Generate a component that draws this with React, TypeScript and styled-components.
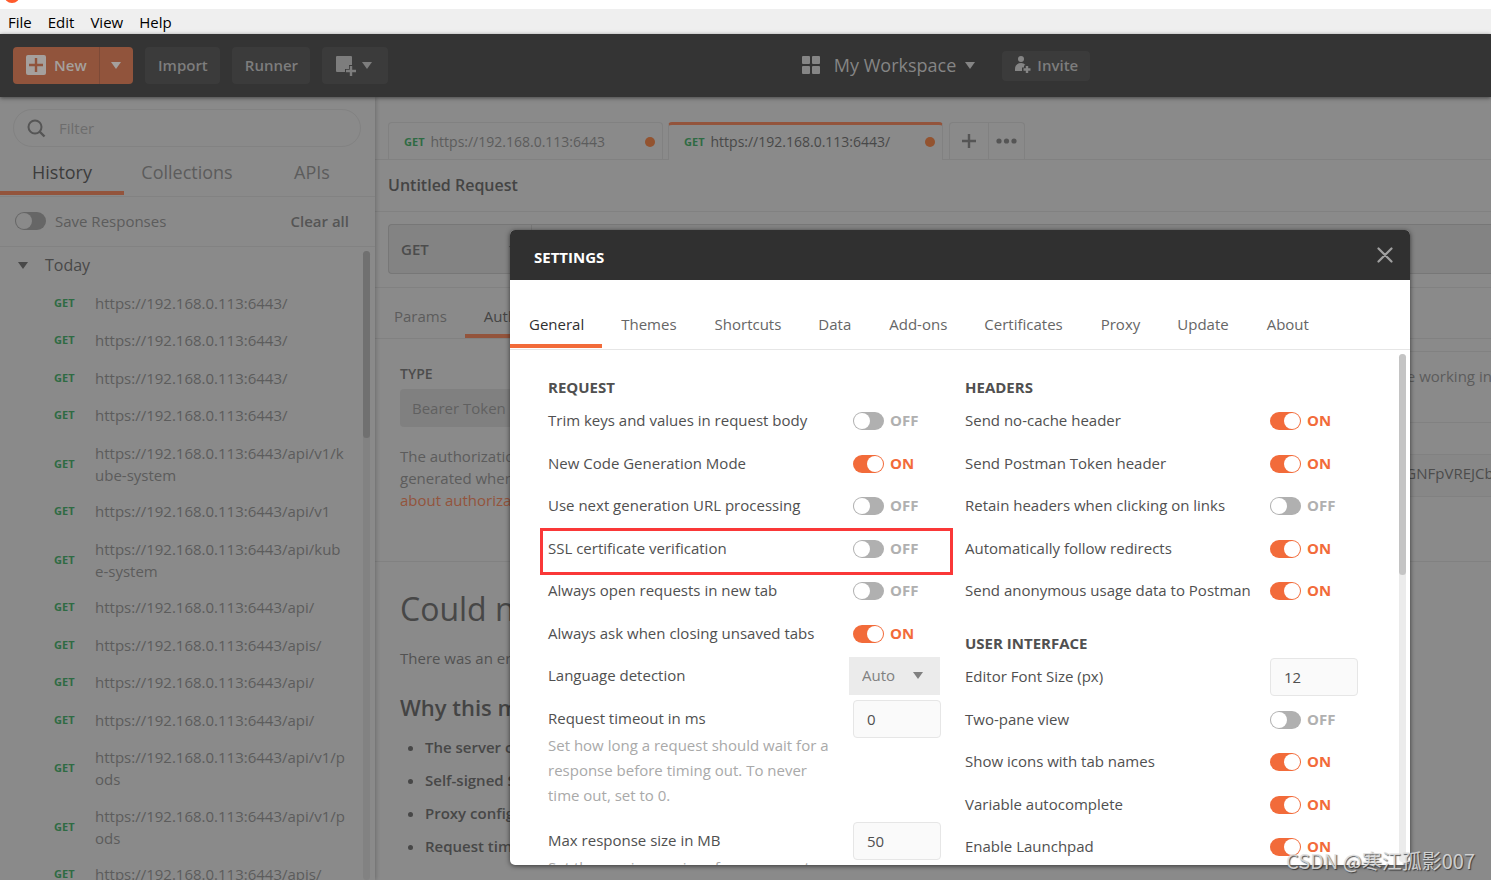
import React, { useState } from "react";
import styled, { createGlobalStyle, css } from "styled-components";

const GlobalStyle = createGlobalStyle`
  *, *::before, *::after { box-sizing: border-box; }
  html, body, #root { height: 100%; }
  body {
    margin: 0;
    overflow: hidden;
    background: #8a8a8a;
    color: #5c5c5c;
    font-family: "Open Sans", "Noto Sans CJK SC", sans-serif;
    font-size: 15px;
    line-height: 22px;
  }
  button, input, select { font: inherit; color: inherit; margin: 0; }
  button { border: 0; padding: 0; background: none; cursor: pointer; }
  h1, h2, h3, p, ul { margin: 0; padding: 0; font-weight: 400; }
`;

const Page = styled.div`
  position: relative;
  display: flex;
  flex-direction: column;
  height: 100vh;
  overflow: hidden;
`;

const TitleStrip = styled.div`
  flex: none;
  height: 9px;
  padding-left: 4px;
  background: #fff;
  svg { display: block; }
`;

const MenuBar = styled.nav`
  display: flex;
  flex: none;
  gap: 16px;
  height: 25px;
  padding: 1px 8px 0;
  background: #efefef;
  color: #000;
`;

const Toolbar = styled.header`
  position: relative;
  z-index: 1;
  display: flex;
  flex: none;
  align-items: center;
  height: 63px;
  padding-left: 13px;
  background: #343434;
  color: #7d7d7d;
  box-shadow: 0 1px 4px rgba(0, 0, 0, 0.5);
`;

const ToolGroup = styled.div`
  display: flex;
  align-items: center;
  gap: 12px;
`;

const ToolButton = styled.button<{ $small?: boolean; $menu?: boolean }>`
  display: flex;
  align-items: center;
  gap: 6px;
  height: ${(p) => (p.$small ? 30 : 37)}px;
  padding: 0 ${(p) => (p.$menu ? 16 : 12)}px ${(p) => (p.$menu ? 0 : 2)}px 13px;
  border-radius: 4px;
  background: #3b3b3b;
  font-weight: 600;
`;

const SplitButton = styled.div`
  display: flex;
  height: 37px;
  border-radius: 4px;
  overflow: hidden;
  background: #91543c;
  color: #a5a09d;
`;

const SplitMain = styled.button`
  display: flex;
  align-items: center;
  gap: 8px;
  width: 87px;
  padding: 0 0 2px 12px;
  border-right: 1px solid #7d4a37;
  font-weight: 600;
`;

const SplitArrow = styled.button`
  display: flex;
  align-items: center;
  justify-content: center;
  width: 33px;
  padding-right: 1px;
`;

const WorkspaceGroup = styled.div`
  display: flex;
  align-items: center;
  gap: 27px;
  margin: 0 auto;
  padding-left: 13px;
`;

const WorkspaceButton = styled.button`
  display: flex;
  align-items: center;
  gap: 9px;
  padding-bottom: 1px;
  font-size: 18px;
  color: #858585;
  svg:first-child { margin-right: 5px; }
`;

const Columns = styled.div`
  display: flex;
  flex: 1;
  min-height: 0;
`;

const Sidebar = styled.aside`
  position: relative;
  display: flex;
  flex: none;
  flex-direction: column;
  width: 375px;
  box-shadow: 1px 0 4px rgba(0, 0, 0, 0.22);
`;

const FilterBox = styled.label`
  display: flex;
  flex: none;
  align-items: center;
  gap: 11px;
  height: 38px;
  margin: 12px 14px 0 13px;
  padding-left: 13px;
  border: 1px solid #828282;
  border-radius: 19px;
  color: #555;
`;

const FilterInput = styled.input`
  flex: 1;
  min-width: 0;
  border: 0;
  outline: 0;
  background: none;
  &::placeholder { color: #6d6d6d; opacity: 1; }
`;

const SideTabs = styled.div`
  display: grid;
  flex: none;
  grid-template-columns: repeat(3, 1fr);
  height: 50px;
  border-bottom: 1px solid #828282;
`;

const SideTab = styled.button<{ $active?: boolean }>`
  height: 48px;
  margin-right: 1px;
  padding-top: 6px;
  border-bottom: 4px solid ${(p) => (p.$active ? "#93543c" : "transparent")};
  color: ${(p) => (p.$active ? "#3c3c3c" : "#5c5c5c")};
  font-size: 18px;
`;

const SaveRow = styled.div`
  display: flex;
  flex: none;
  align-items: center;
  height: 50px;
  padding: 0 26px 2px 15px;
  border-bottom: 1px solid #828282;
  label { flex: 1; margin-left: 9px; }
  button { font-weight: 600; color: #555; }
`;

const Switch = styled.input<{ $dim?: boolean }>`
  appearance: none;
  position: relative;
  flex: none;
  width: 31px;
  height: 18px;
  border-radius: 9px;
  background: ${(p) => (p.$dim ? "#666" : "#b0b0b0")};
  cursor: pointer;
  &::before {
    content: "";
    position: absolute;
    top: 1px;
    left: 1px;
    width: 16px;
    height: 16px;
    border-radius: 50%;
    background: ${(p) => (p.$dim ? "#8a8a8a" : "#fff")};
  }
  &:checked { background: #f26b3a; }
  &:checked::before { left: 14px; }
`;

const History = styled.div`
  display: flex;
  flex: 1;
  justify-content: space-between;
  min-height: 0;
  padding: 4px 5px 0 0;
`;

const HistoryScroll = styled.div`
  width: 347px;
  overflow: hidden;
`;

const DayToggle = styled.button`
  display: flex;
  align-items: center;
  gap: 17px;
  height: 28px;
  margin-bottom: 6px;
  padding-left: 18px;
  color: #484848;
  font-size: 16px;
`;

const Method = styled.span`
  flex: none;
  color: #2f6b43;
  font-size: 11px;
  font-weight: 700;
`;

const HistoryList = styled.ul`
  list-style: none;
`;

const HistoryItem = styled.li<{ $long: boolean }>`
  display: flex;
  align-items: center;
  padding: 7px 0 ${(p) => (p.$long ? 7 : 8)}px 54px;
  &:nth-child(even) { padding-bottom: ${(p) => (p.$long ? 8 : 9)}px; }
  ${Method} { width: 41px; }
  p { width: 252px; word-break: break-all; }
`;

const ScrollTrack = styled.div<{ $dim?: boolean }>`
  flex: none;
  width: 7px;
  border-radius: 4px;
  background: ${(p) => (p.$dim ? "#828282" : "#ebebeb")};
`;

const ScrollThumb = styled.div<{ $dim?: boolean }>`
  height: ${(p) => (p.$dim ? 187 : 221)}px;
  border-radius: 4px;
  background: ${(p) => (p.$dim ? "#707070" : "#c4c4c4")};
`;

const Workbench = styled.main`
  flex: 1;
  min-width: 0;
`;

const RequestTabs = styled.div`
  display: flex;
  height: 63px;
  padding: 25px 0 0 13px;
  border-bottom: 1px solid #818181;
`;

const RequestTab = styled.button<{ $active?: boolean }>`
  display: flex;
  align-items: center;
  gap: 6px;
  width: 275px;
  height: 37px;
  margin-right: 5px;
  padding: 2px 7px 0 15px;
  border: 1px solid #818181;
  border-bottom: 0;
  border-radius: 4px 4px 0 0;
  font-size: 14px;
  ${(p) =>
    p.$active &&
    css`
      height: 38px;
      margin-right: 6px;
      padding-top: 0;
      padding-bottom: 1px;
      border-top: 3px solid #93543c;
      background: #8a8a8a;
      color: #484848;
    `}
`;

const Dot = styled.span`
  width: 10px;
  height: 10px;
  margin-left: auto;
  border-radius: 50%;
  background: #93532f;
`;

const TabTools = styled.div`
  display: flex;
  border: 1px solid #818181;
  border-bottom: 0;
  border-radius: 4px 4px 0 0;
  button {
    display: flex;
    align-items: center;
    justify-content: center;
    width: 38px;
    color: #555;
  }
  button + button { width: 36px; border-left: 1px solid #818181; }
`;

const RequestTitle = styled.h1`
  height: 52px;
  padding: 14px 13px 0;
  border-bottom: 1px solid #818181;
  color: #444;
  font-size: 16px;
  font-weight: 600;
`;

const UrlRow = styled.div`
  padding: 12px 0 13px 13px;
  border-bottom: 1px solid #818181;
`;

const UrlBar = styled.div`
  display: flex;
  height: 50px;
  border: 1px solid #777;
  border-right: 0;
  border-radius: 4px 0 0 4px;
  background: #838383;
`;

const MethodSelect = styled.button`
  display: flex;
  align-items: center;
  justify-content: space-between;
  width: 143px;
  padding: 0 12px;
  border-right: 1px solid #777;
  color: #4c4c4c;
  font-weight: 600;
`;

const SubTabs = styled.div`
  display: flex;
  height: 51px;
  border-bottom: 1px solid #818181;
`;

const SubTab = styled.button<{ $active?: boolean }>`
  height: 50px;
  padding: 10px 18px 0 19px;
  border-bottom: 4px solid ${(p) => (p.$active ? "#93543c" : "transparent")};
  color: ${(p) => (p.$active ? "#444" : "#5c5c5c")};
`;

const AuthPanel = styled.section`
  display: flex;
  height: 223px;
  border-bottom: 1px solid #818181;
`;

const AuthType = styled.div`
  flex: none;
  width: 410px;
  padding: 24px 0 0 25px;
`;

const AuthLabel = styled.h2`
  margin-bottom: 4px;
  color: #4c4c4c;
  font-size: 14px;
  font-weight: 600;
`;

const AuthSelect = styled.button`
  display: flex;
  align-items: center;
  width: 335px;
  height: 38px;
  margin-bottom: 18px;
  padding: 0 12px;
  border-radius: 4px;
  background: #808080;
  color: #606060;
`;

const DimLink = styled.a`
  color: #93543c;
  text-decoration: none;
`;

const AuthFields = styled.div`
  flex: 1;
  min-width: 0;
  padding-top: 12px;
  overflow: hidden;
`;

const Notice = styled.p`
  height: 72px;
  margin-bottom: 31px;
  padding: 13px 0 0 76px;
  border: solid #818181;
  border-width: 1px 0;
  white-space: nowrap;
`;

const TokenRow = styled.label`
  display: grid;
  grid-template-columns: 200px 1fr;
  align-items: center;
`;

const TokenInput = styled.input`
  width: 100%;
  height: 43px;
  padding: 0 0 5px 12px;
  border: solid #818181;
  border-width: 1px 0 1px 1px;
  background: #878787;
  color: #4c4c4c;
`;

const ResponsePane = styled.section`
  padding: 25px 25px 0;
  color: #525252;
`;

const ErrorTitle = styled.h2`
  margin-bottom: 16px;
  color: #474747;
  font-size: 32px;
  line-height: 44px;
`;

const ErrorReason = styled.h3`
  margin: 21px 0 12px;
  color: #444;
  font-size: 22px;
  font-weight: 600;
  line-height: 34px;
`;

const ReasonList = styled.ul`
  padding-left: 25px;
  color: #474747;
  font-weight: 600;
  li { margin-bottom: 11px; }
`;

const Overlay = styled.div`
  position: absolute;
  inset: 0;
  z-index: 2;
  display: flex;
  justify-content: flex-end;
  padding: 230px 81px 15px;
`;

const Dialog = styled.div`
  display: flex;
  flex-direction: column;
  width: 900px;
  border-radius: 5px;
  overflow: hidden;
  background: #fff;
  color: #505050;
  box-shadow: 0 1px 5px rgba(0, 0, 0, 0.6);
`;

const DialogHeader = styled.div`
  display: flex;
  flex: none;
  align-items: center;
  justify-content: space-between;
  height: 50px;
  padding: 0 17px 0 24px;
  background: #303030;
  color: #fff;
  h2 { padding-top: 4px; font-size: 15px; font-weight: 700; }
  button { display: flex; color: #a0a0a0; }
`;

const DialogTabs = styled.div`
  display: flex;
  flex: none;
  height: 70px;
  padding-top: 20px;
  border-bottom: 1px solid #e6e6e6;
`;

const DialogTab = styled.button<{ $active?: boolean }>`
  height: 48px;
  padding: 4px 18px 0 19px;
  border-bottom: 4px solid ${(p) => (p.$active ? "#f26b3a" : "transparent")};
  color: ${(p) => (p.$active ? "#303030" : "#666")};
  &:nth-child(even) { padding-right: 19px; }
`;

const DialogBody = styled.div`
  display: flex;
  flex: 1;
  justify-content: space-between;
  min-height: 0;
  padding: 4px 4px 3px 38px;
  overflow: hidden;
`;

const SettingsColumns = styled.div`
  display: grid;
  grid-template-columns: 417px 1fr;
  flex: 1;
  min-height: 0;
  padding-top: 23px;
`;

const SettingsGroup = styled.section`
  margin-bottom: 21px;
`;

const GroupTitle = styled.h3`
  margin-bottom: 1px;
  font-weight: 700;
  font-size: 15px;
  line-height: 21px;
`;

const SettingRow = styled.div`
  position: relative;
  display: grid;
  grid-template-columns: 305px 1fr;
  padding: 11px 0;
  line-height: 21px;
  &:nth-of-type(even) { padding-bottom: 10px; }
`;

const Control = styled.div`
  display: flex;
  align-items: center;
  gap: 6px;
  height: 21px;
`;

const State = styled.span<{ $on: boolean }>`
  color: ${(p) => (p.$on ? "#f26b3a" : "#b0b0b0")};
  font-weight: 700;
`;

const Help = styled.p`
  width: 290px;
  margin: 4px 0 1px;
  color: #a9a9a9;
  line-height: 25px;
`;

const NumberBox = styled.input`
  flex: none;
  width: 88px;
  height: 38px;
  padding: 0 13px;
  border: 1px solid #e6e6e6;
  border-radius: 4px;
  background: #fafafa;
  color: #505050;
`;

const SelectBox = styled.span`
  display: flex;
  flex: none;
  align-items: center;
  width: 91px;
  height: 38px;
  margin-left: -4px;
  padding: 0 17px 0 13px;
  background: #ebebeb;
  color: #808080;
  select {
    appearance: none;
    flex: 1;
    min-width: 0;
    border: 0;
    padding: 0;
    outline: 0;
    background: none;
  }
  svg { pointer-events: none; }
`;

const Highlight = styled.span`
  position: absolute;
  top: 1px;
  left: -8px;
  width: 413px;
  height: 47px;
  border: 3px solid #fa3838;
  pointer-events: none;
`;

const Watermark = styled.div`
  position: absolute;
  right: 16px;
  bottom: 4px;
  z-index: 3;
  color: rgba(225, 225, 225, 0.85);
  font-family: "Noto Sans CJK SC", sans-serif;
  font-size: 20px;
  line-height: 30px;
  text-shadow: 1px 1px 1px rgba(40, 40, 40, 0.8);
  pointer-events: none;
`;

const Caret = () => (
  <svg width="10" height="7" viewBox="0 0 10 7" fill="currentColor" aria-hidden="true">
    <path d="M0 0h10L5 7z" />
  </svg>
);

const host = "https://192.168.0.113:6443";
const paths = [
  "/", "/", "/", "/", "/api/v1/kube-system", "/api/v1", "/api/kube-system",
  "/api/", "/apis/", "/api/", "/api/", "/api/v1/pods", "/api/v1/pods", "/apis/",
];

const dialogTabs = [
  "General", "Themes", "Shortcuts", "Data", "Add-ons", "Certificates", "Proxy", "Update", "About",
];

type Setting = {
  name: string;
  on?: boolean;
  value?: string;
  options?: string[];
  help?: string;
  marked?: boolean;
};

const requestSettings: Setting[] = [
  { name: "Trim keys and values in request body", on: false },
  { name: "New Code Generation Mode", on: true },
  { name: "Use next generation URL processing", on: false },
  { name: "SSL certificate verification", on: false, marked: true },
  { name: "Always open requests in new tab", on: false },
  { name: "Always ask when closing unsaved tabs", on: true },
  { name: "Language detection", options: ["Auto", "JSON"] },
  {
    name: "Request timeout in ms",
    value: "0",
    help: "Set how long a request should wait for a response before timing out. To never time out, set to 0.",
  },
  {
    name: "Max response size in MB",
    value: "50",
    help: "Set the maximum size of a response to download.",
  },
];

const headerSettings: Setting[] = [
  { name: "Send no-cache header", on: true },
  { name: "Send Postman Token header", on: true },
  { name: "Retain headers when clicking on links", on: false },
  { name: "Automatically follow redirects", on: true },
  { name: "Send anonymous usage data to Postman", on: true },
];

const interfaceSettings: Setting[] = [
  { name: "Editor Font Size (px)", value: "12" },
  { name: "Two-pane view", on: false },
  { name: "Show icons with tab names", on: true },
  { name: "Variable autocomplete", on: true },
  { name: "Enable Launchpad", on: true },
];

function SettingControl({ id, setting }: { id: string; setting: Setting }) {
  const [on, setOn] = useState(Boolean(setting.on));
  if (setting.options) {
    return (
      <SelectBox>
        <select id={id}>
          {setting.options.map((o) => (
            <option key={o}>{o}</option>
          ))}
        </select>
        <Caret />
      </SelectBox>
    );
  }
  if (setting.value !== undefined) {
    return <NumberBox id={id} type="text" inputMode="numeric" defaultValue={setting.value} />;
  }
  return (
    <>
      <Switch id={id} type="checkbox" checked={on} onChange={() => setOn(!on)} />
      <State $on={on}>{on ? "ON" : "OFF"}</State>
    </>
  );
}

function Settings({ title, items }: { title: string; items: Setting[] }) {
  return (
    <SettingsGroup>
      <GroupTitle>{title}</GroupTitle>
      {items.map((s) => {
        const id = s.name.toLowerCase().replace(/[^a-z]+/g, "-");
        return (
          <SettingRow key={id}>
            <div>
              <label htmlFor={id}>{s.name}</label>
              {s.help && <Help>{s.help}</Help>}
            </div>
            <Control>
              <SettingControl id={id} setting={s} />
            </Control>
            {s.marked && <Highlight />}
          </SettingRow>
        );
      })}
    </SettingsGroup>
  );
}

export default function App() {
  return (
    <Page>
      <GlobalStyle />
      <TitleStrip>
        <svg width="16" height="4" viewBox="0 0 16 4" aria-hidden="true">
          <circle cx="8" cy="-5" r="8" fill="#ff5a2b" />
        </svg>
      </TitleStrip>
      <MenuBar>
        <button>File</button>
        <button>Edit</button>
        <button>View</button>
        <button>Help</button>
      </MenuBar>

      <Toolbar>
        <ToolGroup>
          <SplitButton>
            <SplitMain>
              <svg width="21" height="20" viewBox="0 0 21 20" aria-hidden="true">
                <rect x="1" width="20" height="20" rx="2" fill="#a5a09d" />
                <path d="M11 3v14M4 10h14" stroke="#91543c" strokeWidth="2.4" />
              </svg>
              New
            </SplitMain>
            <SplitArrow aria-label="New options">
              <Caret />
            </SplitArrow>
          </SplitButton>
          <ToolButton>Import</ToolButton>
          <ToolButton>Runner</ToolButton>
          <ToolButton $menu aria-label="Open new window">
            <svg width="21" height="20" viewBox="0 0 21 20" aria-hidden="true">
              <path fill="#7d7d7d" d="M2 0h14a1 1 0 0 1 1 1v8h-3v4h-4v3H2a1 1 0 0 1-1-1V1a1 1 0 0 1 1-1z" />
              <path d="M16 10v10M11 15h10" stroke="#7d7d7d" strokeWidth="2.4" />
            </svg>
            <Caret />
          </ToolButton>
        </ToolGroup>
        <WorkspaceGroup>
          <WorkspaceButton>
            <svg width="18" height="18" viewBox="0 0 18 18" fill="#858585" aria-hidden="true">
              <rect width="8" height="8" rx="1" />
              <rect x="10" width="8" height="8" rx="1" />
              <rect y="10" width="8" height="8" rx="1" />
              <rect x="10" y="10" width="8" height="8" rx="1" />
            </svg>
            My Workspace
            <Caret />
          </WorkspaceButton>
          <ToolButton $small>
            <svg width="16" height="18" viewBox="0 0 16 18" fill="#858585" aria-hidden="true">
              <circle cx="6" cy="3" r="3" />
              <path d="M0 15v-2a6 6 0 0 1 10.500-4L9 9.500v2H7v3.500z" />
              <path d="M12 10v7M8.500 13.500h7" stroke="#858585" strokeWidth="2.400" />
            </svg>
            Invite
          </ToolButton>
        </WorkspaceGroup>
      </Toolbar>

      <Columns>
        <Sidebar>
          <FilterBox>
            <svg width="19" height="19" viewBox="0 0 19 19" fill="none" stroke="currentColor" aria-hidden="true">
              <circle cx="8" cy="8" r="6.500" strokeWidth="2" />
              <path d="M12.500 12.500l5 5" strokeWidth="2.400" />
            </svg>
            <FilterInput type="text" placeholder="Filter" aria-label="Filter" />
          </FilterBox>
          <SideTabs>
            <SideTab $active>History</SideTab>
            <SideTab>Collections</SideTab>
            <SideTab>APIs</SideTab>
          </SideTabs>
          <SaveRow>
            <Switch id="save-responses" type="checkbox" $dim />
            <label htmlFor="save-responses">Save Responses</label>
            <button>Clear all</button>
          </SaveRow>
          <History>
            <HistoryScroll>
              <DayToggle>
                <Caret />
                Today
              </DayToggle>
              <HistoryList>
                {paths.map((path, i) => (
                  <HistoryItem key={i} $long={path.length > 8}>
                    <Method>GET</Method>
                    <p>{host + path}</p>
                  </HistoryItem>
                ))}
              </HistoryList>
            </HistoryScroll>
            <ScrollTrack $dim>
              <ScrollThumb $dim />
            </ScrollTrack>
          </History>
        </Sidebar>

        <Workbench>
          <RequestTabs>
            <RequestTab>
              <Method>GET</Method>
              {host}
              <Dot />
            </RequestTab>
            <RequestTab $active>
              <Method>GET</Method>
              {host}/
              <Dot />
            </RequestTab>
            <TabTools>
              <button aria-label="New tab">
                <svg width="16" height="16" viewBox="0 0 16 16" stroke="currentColor" strokeWidth="2.400" aria-hidden="true">
                  <path d="M8 1v14M1 8h14" />
                </svg>
              </button>
              <button aria-label="Tab options">
                <svg width="21" height="6" viewBox="0 0 21 6" fill="currentColor" aria-hidden="true">
                  <circle cx="3" cy="3" r="2.600" />
                  <circle cx="10.500" cy="3" r="2.600" />
                  <circle cx="18" cy="3" r="2.600" />
                </svg>
              </button>
            </TabTools>
          </RequestTabs>
          <RequestTitle>Untitled Request</RequestTitle>
          <UrlRow>
            <UrlBar>
              <MethodSelect>
                GET
                <Caret />
              </MethodSelect>
            </UrlBar>
          </UrlRow>
          <SubTabs>
            <SubTab>Params</SubTab>
            <SubTab $active>Authorization</SubTab>
          </SubTabs>
          <AuthPanel>
            <AuthType>
              <AuthLabel>TYPE</AuthLabel>
              <AuthSelect>Bearer Token</AuthSelect>
              <p>
                The authorization header will be automatically generated when you send the request.{" "}
                <DimLink href="#authorization">Learn more about authorization</DimLink>
              </p>
            </AuthType>
            <AuthFields>
              <Notice>
                Heads up! These parameters hold sensitive data. To keep this data secure while working in a
                collaborative environment, we recommend using variables.
              </Notice>
              <TokenRow>
                <span>Token</span>
                <TokenInput type="text" defaultValue="eyJhbGciOiJSUzI1NiIsImtpZCI6InRhc2stYWRtaW4tdG9rZW4GNFpVREJCbWx" />
              </TokenRow>
            </AuthFields>
          </AuthPanel>
          <ResponsePane>
            <ErrorTitle>Could not get any response</ErrorTitle>
            <p>There was an error connecting to the server.</p>
            <ErrorReason>Why this might have happened:</ErrorReason>
            <ReasonList>
              <li>The server couldn't send a response</li>
              <li>Self-signed SSL certificates are being blocked</li>
              <li>Proxy configured incorrectly</li>
              <li>Request timeout</li>
            </ReasonList>
          </ResponsePane>
        </Workbench>
      </Columns>

      <Overlay>
        <Dialog role="dialog" aria-modal="true" aria-labelledby="settings-title">
          <DialogHeader>
            <h2 id="settings-title">SETTINGS</h2>
            <button aria-label="Close">
              <svg width="16" height="16" viewBox="0 0 16 16" stroke="currentColor" strokeWidth="2.200" strokeLinecap="round" aria-hidden="true">
                <path d="M1.500 1.500l13 13M14.500 1.500l-13 13" />
              </svg>
            </button>
          </DialogHeader>
          <DialogTabs>
            {dialogTabs.map((t) => (
              <DialogTab key={t} $active={t === "General"}>
                {t}
              </DialogTab>
            ))}
          </DialogTabs>
          <DialogBody>
            <SettingsColumns>
              <Settings title="REQUEST" items={requestSettings} />
              <div>
                <Settings title="HEADERS" items={headerSettings} />
                <Settings title="USER INTERFACE" items={interfaceSettings} />
              </div>
            </SettingsColumns>
            <ScrollTrack>
              <ScrollThumb />
            </ScrollTrack>
          </DialogBody>
        </Dialog>
      </Overlay>
      <Watermark>CSDN @寒江孤影007</Watermark>
    </Page>
  );
}
